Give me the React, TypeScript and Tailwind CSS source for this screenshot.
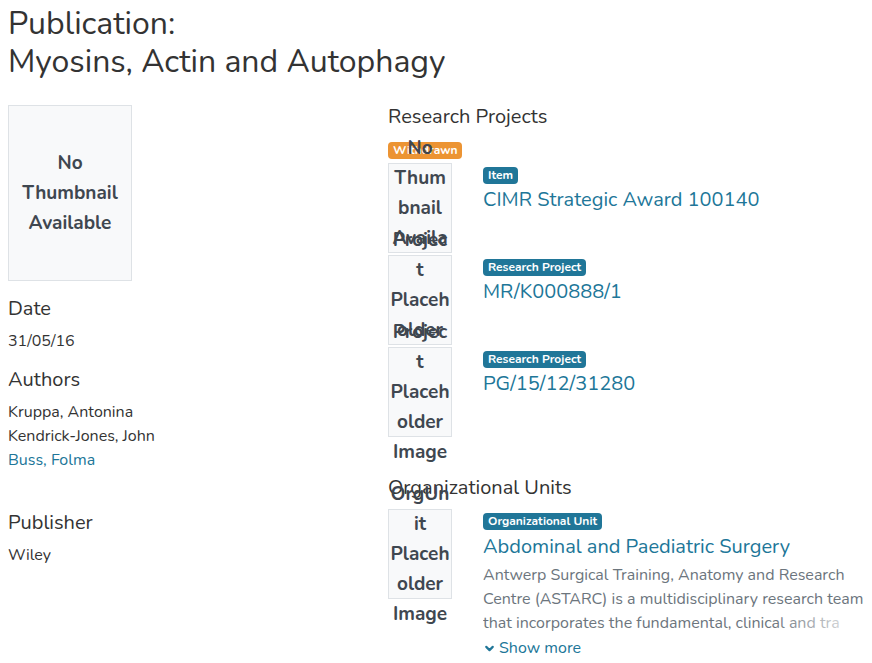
import { ChevronDown } from 'lucide-react'

const projects = [
  { type: 'Item', title: 'CIMR Strategic Award 100140', thumb: 'No Thumbnail Available' },
  { type: 'Research Project', title: 'MR/K000888/1', thumb: 'Project Placeholder Image' },
  { type: 'Research Project', title: 'PG/15/12/31280', thumb: 'Project Placeholder Image' },
]

function Badge({ children, warn }: { children: string; warn?: boolean }) {
  return (
    <span
      className={`inline-block rounded-[4px] px-[5px] text-[12px] leading-[17px] font-bold text-white ${
        warn ? 'bg-[#ec9433]' : 'bg-[#207698]'
      }`}
    >
      {children}
    </span>
  )
}

function Thumb({ text }: { text: string }) {
  return (
    <div className="relative w-[64px] h-[90px] bg-[#f8f9fa] border border-[#dee2e6] flex items-center justify-center">
      <span className="block w-full px-[1px] text-center break-words text-[19px] leading-[30px] font-bold text-[#3f4750]">
        {text}
      </span>
    </div>
  )
}

function Field({ label, children }: { label: string; children: React.ReactNode }) {
  return (
    <div className="mb-[15px]">
      <h5 className="text-[20px] leading-[24px] text-[#333] mb-[8px]">{label}</h5>
      <div className="text-[16px] leading-[24px] text-[#333]">{children}</div>
    </div>
  )
}

export default function App() {
  return (
    <div className="bg-white h-[663px] pl-[8px] pt-[5px] font-['Nunito','Noto_Sans',sans-serif] text-[#333] overflow-hidden">
      <h1 className="text-[32px] leading-[38px] text-[#333] mb-[24px]">
        Publication:
        <br />
        Myosins, Actin and Autophagy
      </h1>
      <div className="flex">
        <div className="w-[380px] shrink-0">
          <div className="w-[124px] h-[176px] bg-[#f8f9fa] border border-[#dee2e6] flex items-center justify-center mb-[16px]">
            <span className="text-center text-[19px] leading-[30px] font-bold text-[#3f4750]">
              No
              <br />
              Thumbnail
              <br />
              Available
            </span>
          </div>
          <Field label="Date">31/05/16</Field>
          <Field label="Authors">
            <div>Kruppa, Antonina</div>
            <div>Kendrick-Jones, John</div>
            <div className="text-[#207698]">Buss, Folma</div>
          </Field>
          <div className="h-[24px]" />
          <Field label="Publisher">Wiley</Field>
        </div>
        <div className="flex-1 min-w-0">
          <h2 className="text-[20px] leading-[26px] text-[#333] -mt-[1px] mb-[12px]">Research Projects</h2>
          <div className="flex mb-[4px]">
            <Badge warn>Withdrawn</Badge>
          </div>
          <div className="flex flex-col gap-[2px]">
            {projects.map(p => (
              <div key={p.title} className="flex">
                <div className="w-[95px] shrink-0">
                  <Thumb text={p.thumb} />
                </div>
                <div className="pt-[4px] flex flex-col items-start">
                  <Badge>{p.type}</Badge>
                  <div className="text-[20px] leading-[30px] text-[#207698] mt-[1px]">{p.title}</div>
                </div>
              </div>
            ))}
          </div>
          <h2 className="text-[20px] leading-[26px] text-[#333] mt-[38px] mb-[8px]">Organizational Units</h2>
          <div className="flex">
            <div className="w-[95px] shrink-0">
              <Thumb text="OrgUnit Placeholder Image" />
            </div>
            <div className="pt-[4px] min-w-0 flex-1 flex flex-col items-start">
              <Badge>Organizational Unit</Badge>
              <div className="text-[20px] leading-[30px] text-[#207698] mt-[2px]">Abdominal and Paediatric Surgery</div>
              <div className="relative w-full mt-[1px] max-h-[72px] overflow-hidden text-[16px] leading-[24px] text-[#6c757d]">
                Antwerp Surgical Training, Anatomy and Research Centre (ASTARC) is a multidisciplinary research team
                that incorporates the fundamental, clinical and tra
                <div className="absolute right-0 top-[48px] h-[24px] w-[100px] bg-gradient-to-r from-transparent to-white" />
              </div>
              <div className="flex items-center gap-[3px] text-[16px] leading-[24px] text-[#207698] mt-[1px]">
                <ChevronDown size={13} strokeWidth={4} />
                Show more
              </div>
            </div>
          </div>
        </div>
      </div>
    </div>
  )
}
